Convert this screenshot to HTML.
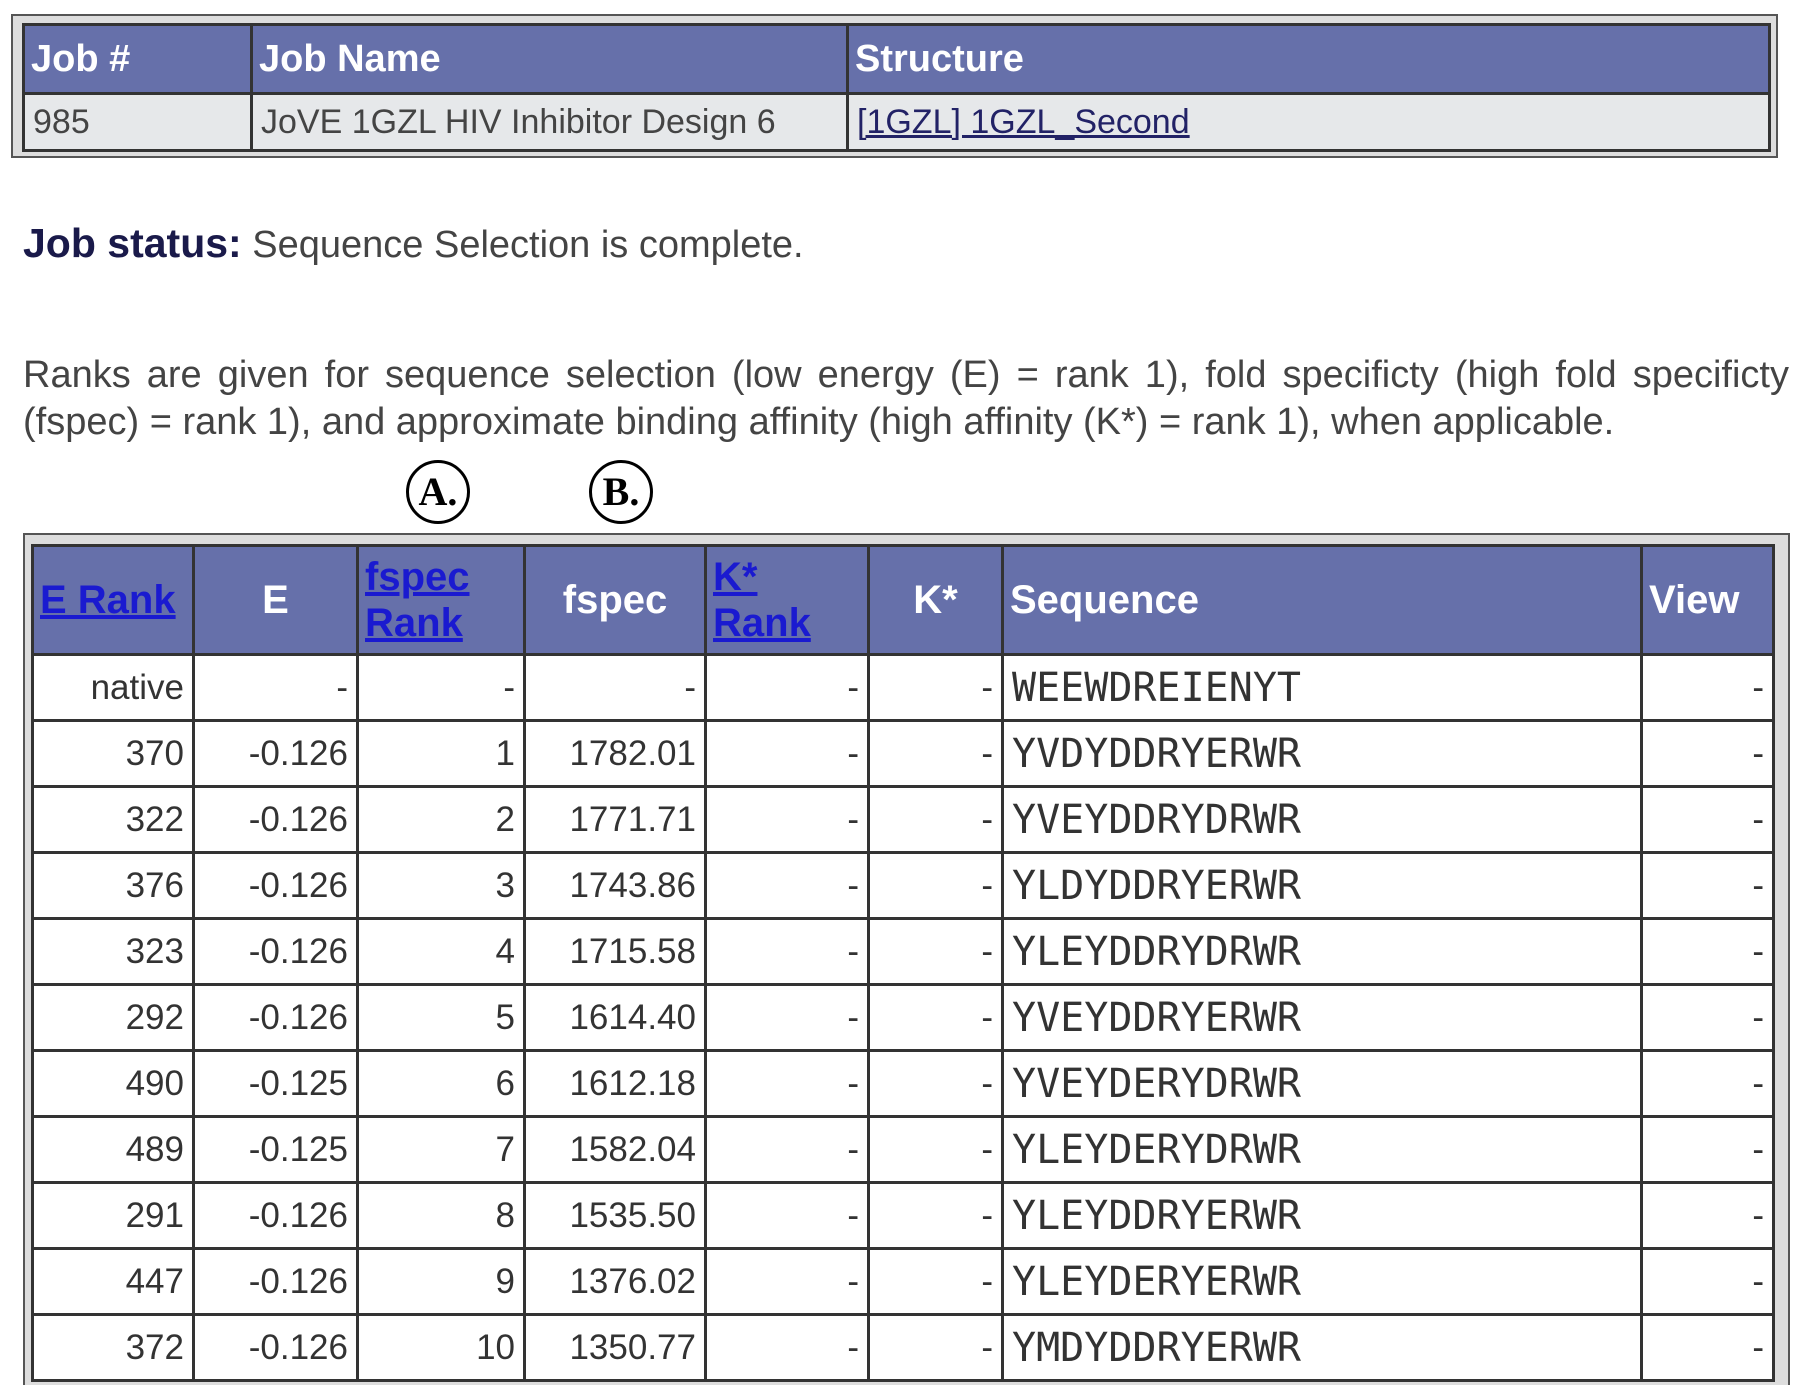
<!DOCTYPE html>
<html style="width:1800px;height:1385px;overflow:hidden"><head><meta charset="utf-8"><style>
body{margin:0;width:1800px;height:1385px;overflow:hidden;background:#fff;font-family:"Liberation Sans",sans-serif;color:#333;position:relative}
.frame{position:absolute;border:2px solid #555;background:#ddd;box-sizing:border-box}
table{border-collapse:separate;border-spacing:3px;background:#333;table-layout:fixed}
th{background:#6670aa;color:#fff;font-weight:bold;text-align:left;padding:0 6px}
td{background:#fff;padding:0 8px;text-align:right;font-size:35px;height:63px}
a{color:#1a1ad0;text-decoration:underline}
.top td{background:#e6e8ea;text-align:left;font-size:34px;height:54px;color:#444}
.top th{font-size:38px;height:66px}
.seq{text-align:left;font-family:"DejaVu Sans Mono","Liberation Mono",monospace;font-size:40px;color:#333}
.main th{font-size:40px;height:106px;line-height:46px}
.c{position:absolute;width:58px;height:58px;border:3px solid #000;border-radius:50%;font-family:"Liberation Serif",serif;font-weight:bold;font-size:40px;color:#000;text-align:center;line-height:58px}
</style></head><body>
<div class="frame" style="left:11px;top:14px;width:1767px;height:144px;padding:7px 9px">
<table class="top" style="width:1749px">
<col style="width:225px"><col style="width:593px"><col>
<tr><th>Job #</th><th>Job Name</th><th>Structure</th></tr>
<tr><td>985</td><td>JoVE 1GZL HIV Inhibitor Design 6</td><td><a style="color:#222266">[1GZL] 1GZL_Second</a></td></tr>
</table></div>
<div style="position:absolute;left:23px;top:220px;font-size:38px;color:#444"><b style="color:#1a1a4a;font-size:41px">Job status:</b> Sequence Selection is complete.</div>
<div style="position:absolute;left:23px;top:352px;width:1766px;font-size:38px;line-height:47px;text-align:justify;color:#444">Ranks are given for sequence selection (low energy (E) = rank 1), fold specificty (high fold specificty (fspec) = rank 1), and approximate binding affinity (high affinity (K*) = rank 1), when applicable.</div>
<div class="c" style="left:406px;top:460px">A.</div>
<div class="c" style="left:589px;top:460px">B.</div>
<div class="frame" style="left:23px;top:533px;width:1767px;height:900px;padding:9px 6px">
<table class="main" style="width:1744px">
<col style="width:158px"><col style="width:161px"><col style="width:164px"><col style="width:178px"><col style="width:160px"><col style="width:131px"><col style="width:636px"><col>
<tr><th><a>E Rank</a></th><th style="text-align:center">E</th><th><a>fspec<br>Rank</a></th><th style="text-align:center">fspec</th><th><a>K*<br>Rank</a></th><th style="text-align:center">K*</th><th>Sequence</th><th>View</th></tr>
<tr><td>native</td><td>-</td><td>-</td><td>-</td><td>-</td><td>-</td><td class="seq">WEEWDREIENYT</td><td>-</td></tr>
<tr><td>370</td><td>-0.126</td><td>1</td><td>1782.01</td><td>-</td><td>-</td><td class="seq">YVDYDDRYERWR</td><td>-</td></tr>
<tr><td>322</td><td>-0.126</td><td>2</td><td>1771.71</td><td>-</td><td>-</td><td class="seq">YVEYDDRYDRWR</td><td>-</td></tr>
<tr><td>376</td><td>-0.126</td><td>3</td><td>1743.86</td><td>-</td><td>-</td><td class="seq">YLDYDDRYERWR</td><td>-</td></tr>
<tr><td>323</td><td>-0.126</td><td>4</td><td>1715.58</td><td>-</td><td>-</td><td class="seq">YLEYDDRYDRWR</td><td>-</td></tr>
<tr><td>292</td><td>-0.126</td><td>5</td><td>1614.40</td><td>-</td><td>-</td><td class="seq">YVEYDDRYERWR</td><td>-</td></tr>
<tr><td>490</td><td>-0.125</td><td>6</td><td>1612.18</td><td>-</td><td>-</td><td class="seq">YVEYDERYDRWR</td><td>-</td></tr>
<tr><td>489</td><td>-0.125</td><td>7</td><td>1582.04</td><td>-</td><td>-</td><td class="seq">YLEYDERYDRWR</td><td>-</td></tr>
<tr><td>291</td><td>-0.126</td><td>8</td><td>1535.50</td><td>-</td><td>-</td><td class="seq">YLEYDDRYERWR</td><td>-</td></tr>
<tr><td>447</td><td>-0.126</td><td>9</td><td>1376.02</td><td>-</td><td>-</td><td class="seq">YLEYDERYERWR</td><td>-</td></tr>
<tr><td>372</td><td>-0.126</td><td>10</td><td>1350.77</td><td>-</td><td>-</td><td class="seq">YMDYDDRYERWR</td><td>-</td></tr>
</table></div>
</body></html>
